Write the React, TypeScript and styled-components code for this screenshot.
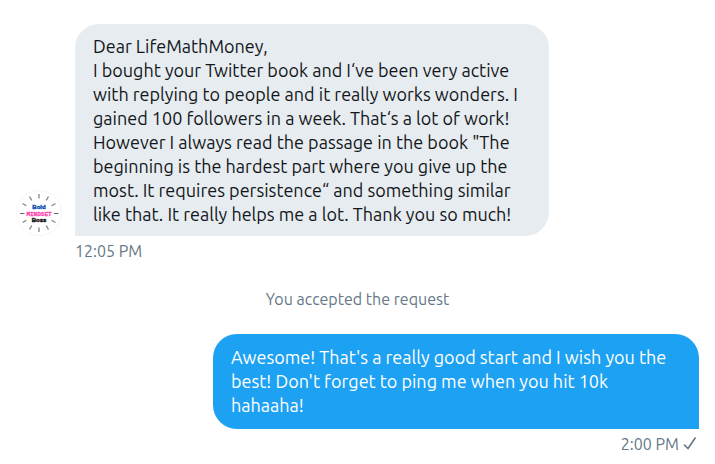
import React from "react";
import styled, { createGlobalStyle } from "styled-components";

const GlobalStyle = createGlobalStyle`
  * { box-sizing: border-box; }
  body {
    margin: 0;
    background: #ffffff;
    color: #14171a;
    font-family: Ubuntu, "Noto Sans", "Open Sans", sans-serif;
  }
`;

const Conversation = styled.main`
  display: flex;
  flex-direction: column;
  padding: 24px 16px 8px;
`;

const MessageRow = styled.article<{ $sent?: boolean }>`
  display: flex;
  align-items: flex-end;
  justify-content: ${(p) => (p.$sent ? "flex-end" : "flex-start")};
  gap: 12px;
`;

const MessageColumn = styled.div<{ $sent?: boolean }>`
  display: flex;
  flex-direction: column;
  align-items: ${(p) => (p.$sent ? "flex-end" : "flex-start")};
`;

const Bubble = styled.p<{ $sent?: boolean }>`
  margin: 0;
  max-width: ${(p) => (p.$sent ? "486px" : "474px")};
  padding: ${(p) => (p.$sent ? "11px 18px 12px" : "10px 18px")};
  border-radius: ${(p) => (p.$sent ? "24px 24px 0 24px" : "24px 24px 24px 0")};
  background: ${(p) => (p.$sent ? "#1da1f2" : "#e6ecf0")};
  color: ${(p) => (p.$sent ? "#ffffff" : "#14171a")};
  font-size: 18px;
  line-height: 24px;
  white-space: pre-line;
`;

const Meta = styled.div`
  display: flex;
  align-items: center;
  gap: 4px;
  padding-top: 5px;
  color: #657786;
  font-size: 16px;
  line-height: 20px;
`;

const Notice = styled.p`
  margin: 28px 0 25px;
  color: #657786;
  font-size: 16px;
  line-height: 20px;
  text-align: center;
`;

const Avatar = styled.svg`
  flex: none;
  width: 47px;
  height: 47px;
  margin-bottom: 25px;
`;

const Check = styled.svg`
  width: 16px;
  height: 16px;
`;

const rays = [30, 60, 90, 120, 150, 210, 240, 270, 300, 330];

function BossAvatar() {
  return (
    <Avatar viewBox="0 0 47 47" role="img" aria-label="Bold Mindset Boss">
      <circle cx="23" cy="24" r="22.5" fill="#fff" stroke="#f5f5f5" />
      <g stroke="#858585" strokeWidth="1.3">
        {rays.map((angle) => (
          <path key={angle} d="M37.500 24h4.500" transform={`rotate(${angle} 23 24)`} />
        ))}
      </g>
      <path d="M4 24.500h4.500M38 24.500h4.500" stroke="#666" strokeWidth="1.200" />
      <g textAnchor="middle" fontFamily="Liberation Sans, sans-serif" fontWeight="bold">
        <text x="23" y="20" fontSize="6" fill="#0b4fae" stroke="#0b4fae" strokeWidth="0.400">Bold</text>
        <text x="23" y="26.500" fontSize="6" fontFamily="Liberation Mono, monospace" fill="#ff45b0" stroke="#ff45b0" strokeWidth="0.300">MINDSET</text>
        <text x="23" y="33" fontSize="6" fill="#111" stroke="#111" strokeWidth="0.400">Boss</text>
      </g>
    </Avatar>
  );
}

const received = `Dear LifeMathMoney,
I bought your Twitter book and I‘ve been very active with replying to people and it really works wonders. I gained 100 followers in a week. That‘s a lot of work! However I always read the passage in the book "The beginning is the hardest part where you give up the most. It requires persistence“ and something similar like that. It really helps me a lot. Thank you so much!`;

const sent = `Awesome! That's a really good start and I wish you the best! Don't forget to ping me when you hit 10k hahaaha!`;

export default function App() {
  return (
    <>
      <GlobalStyle />
      <Conversation>
        <MessageRow>
          <BossAvatar />
          <MessageColumn>
            <Bubble>{received}</Bubble>
            <Meta>
              <time dateTime="12:05">12:05 PM</time>
            </Meta>
          </MessageColumn>
        </MessageRow>
        <Notice>You accepted the request</Notice>
        <MessageRow $sent>
          <MessageColumn $sent>
            <Bubble $sent>{sent}</Bubble>
            <Meta>
              <time dateTime="14:00">2:00 PM</time>
              <Check viewBox="0 0 16 16" fill="none" role="img" aria-label="Sent">
                <path d="M1 8.500l4 4L12.500 1.500" stroke="#657786" strokeWidth="1.600" />
              </Check>
            </Meta>
          </MessageColumn>
        </MessageRow>
      </Conversation>
    </>
  );
}
